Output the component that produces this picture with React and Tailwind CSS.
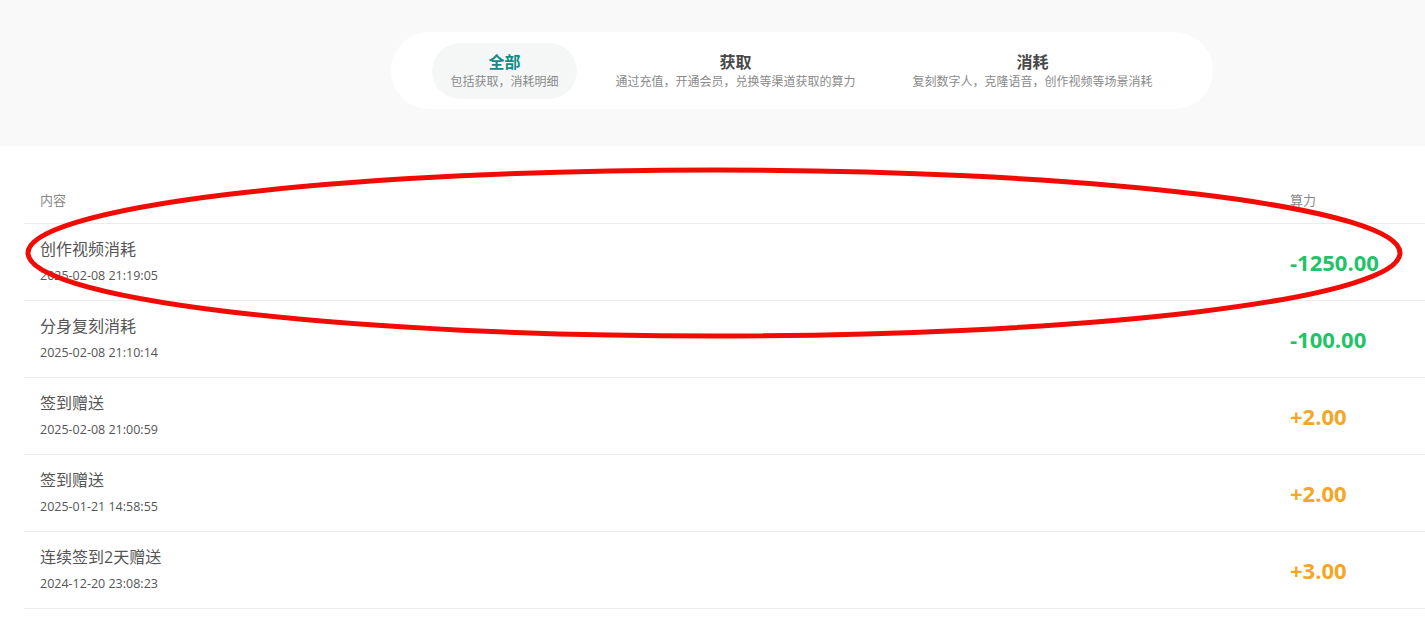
import React from "react";

const tabs = [
  { title: "全部", sub: "包括获取，消耗明细", active: true },
  { title: "获取", sub: "通过充值，开通会员，兑换等渠道获取的算力" },
  { title: "消耗", sub: "复刻数字人，克隆语音，创作视频等场景消耗" },
];

const rows = [
  { title: "创作视频消耗", date: "2025-02-08 21:19:05", value: "-1250.00", neg: true },
  { title: "分身复刻消耗", date: "2025-02-08 21:10:14", value: "-100.00", neg: true },
  { title: "签到赠送", date: "2025-02-08 21:00:59", value: "+2.00" },
  { title: "签到赠送", date: "2025-01-21 14:58:55", value: "+2.00" },
  { title: "连续签到2天赠送", date: "2024-12-20 23:08:23", value: "+3.00" },
];

export default function App() {
  return (
    <div
      className="relative w-[1425px] h-[617px] overflow-hidden bg-white"
      style={{ fontFamily: '"Open Sans", "Noto Sans CJK SC", sans-serif' }}
    >
      <div className="h-[146px] bg-[#f9f9f9] pt-8">
        <div className="ml-[391px] inline-flex gap-5 rounded-full bg-white pl-[41px] pr-[42px] pt-[11px] pb-[10px]">
          {tabs.map((t) => (
            <div
              key={t.title}
              className={`flex flex-col items-center rounded-full px-[18.5px] py-2 ${
                t.active ? "bg-[#f5f7f7]" : ""
              }`}
            >
              <div
                className={`text-[16px] leading-[22px] font-bold ${
                  t.active ? "text-[#138a87]" : "text-[#484848]"
                }`}
              >
                {t.title}
              </div>
              <div className="text-[12px] leading-[18px] text-[#8a8a8a] whitespace-nowrap">
                {t.sub}
              </div>
            </div>
          ))}
        </div>
      </div>

      <div className="ml-6 pt-[32px]">
        <div className="flex h-[46px] items-center border-b border-[#ececec] text-[13px] text-[#888]">
          <div className="flex-1 pl-4">内容</div>
          <div className="w-[135px]">算力</div>
        </div>
        {rows.map((r, i) => (
          <div key={i} className="flex items-center border-b border-[#ececec]">
            <div className="flex-1 pl-4 pt-[13px] pb-[15px]">
              <div className="text-[16px] leading-[24px] text-[#555]">{r.title}</div>
              <div className="mt-[6px] text-[12.5px] leading-[18px] text-[#555]">{r.date}</div>
            </div>
            <div
              className={`w-[135px] text-[22px] font-bold ${
                r.neg ? "text-[#1fc46a]" : "text-[#f5a623]"
              }`}
            >
              {r.value}
            </div>
          </div>
        ))}
      </div>

      <svg
        className="pointer-events-none absolute left-0 top-0"
        width="1425"
        height="617"
        viewBox="0 0 1425 617"
      >
        <ellipse
          cx="714"
          cy="253"
          rx="686"
          ry="83"
          fill="none"
          stroke="#f00c04"
          strokeWidth="5"
        />
      </svg>
    </div>
  );
}
